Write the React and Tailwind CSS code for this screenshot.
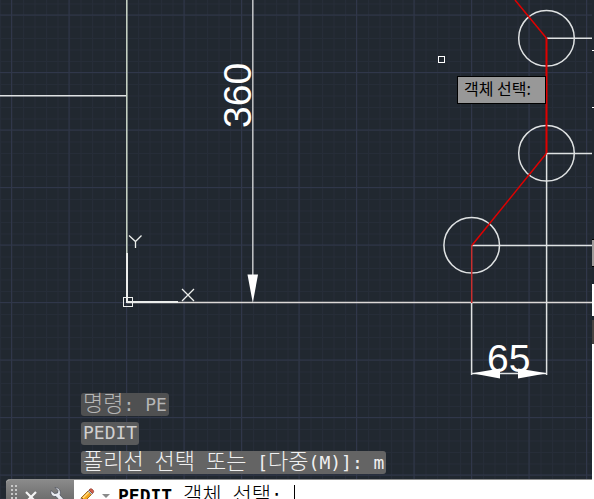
import React from "react";

function Grid() {
  return (
    <>
      <defs>
        <pattern id="minor" x="11.5" y="15" width="11.5" height="11.5" patternUnits="userSpaceOnUse">
          <path d="M0 0H11.5M0 0V11.5" stroke="#262d38" strokeWidth="2" fill="none" />
        </pattern>
        <pattern id="major" x="11" y="14.5" width="57.5" height="57.5" patternUnits="userSpaceOnUse">
          <path d="M0 0.5H57.5M0.5 0V57.5" stroke="#30374a" strokeWidth="1" fill="none" />
        </pattern>
      </defs>
      <rect width="100%" height="100%" fill="url(#minor)" />
      <rect width="100%" height="100%" fill="url(#major)" />
    </>
  );
}

function Drawing() {
  return (
    <svg className="absolute inset-0 h-full w-full" role="img" aria-label="Drawing area">
      <Grid />
      <g fill="none" stroke="#dfe2e3" strokeWidth="1.5">
        <path d="M0 95.7H127" />
        <path d="M126.8 0V302" stroke="#cbd8c9" />
        <path d="M127 302.6H592" stroke="#ddd9d7" />
        <path d="M252.8 0V280" stroke="#c4c6c8" />
        <path d="M547 38.3H592M547 153.4H592M472 245.4H592" />
        <path d="M546.6 153V375M471.6 303V375M472 373.4H547" />
        <circle cx="546.5" cy="38.3" r="27.8" />
        <circle cx="546.5" cy="153.3" r="27.8" />
        <circle cx="471.7" cy="245.3" r="27.8" />
      </g>
      <g fill="none" stroke="#e00000" strokeWidth="1.5">
        <path d="M515 0L546.5 38.3" />
        <path d="M546.5 38V153" strokeWidth="2" />
        <path d="M546.5 153.3L472 245.3" />
        <path d="M471.7 245V303" stroke="#c92e2e" />
      </g>
      <g fill="#fff">
        <path d="M247.5 274.5H258L252.8 303Z" />
        <path d="M472 373.3L500 368.5V378.5Z" />
        <path d="M547 373.3L518 368.5V378.5Z" />
      </g>
      <g fill="none" stroke="#eceeec" strokeWidth="1">
        <path d="M127 253V302H178" strokeWidth="2" />
        <rect x="123.5" y="297.5" width="9" height="9" />
        <path d="M129 235.5L135.5 241.5L141.5 235.5M135.5 241.5V248" strokeWidth="1.3" />
        <path d="M182 289L194 301M194 289L182 301" strokeWidth="1.3" />
        <rect x="438.5" y="56.5" width="6" height="6" stroke="#fff" />
      </g>
      <g className="fill-white font-['Liberation_Sans',Arial,sans-serif] text-[39px]">
        <text x="487" y="372">65</text>
        <text transform="translate(251 128) rotate(-90)">360</text>
      </g>
    </svg>
  );
}

function WindowEdge() {
  return (
    <div className="absolute inset-y-0 right-0 flex w-0.5 flex-col bg-[#212830]" aria-hidden="true">
      <div className="mt-[50px] h-px bg-white" />
      <div className="mt-14 h-px bg-white" />
      <div className="mt-[131px] h-7 border-y border-black bg-[#9d9b99]" />
      <div className="mt-[17px] h-8 bg-white" />
      <div className="mt-1 h-6 bg-[#484442]" />
      <div className="flex-1 bg-white" />
    </div>
  );
}

function MixedText({ text, size }) {
  return text.split(/([가-힣]+)/).map((part, i) =>
    i % 2 ? (
      <span key={i} className={`font-light ${size}`}>{part}</span>
    ) : (
      part
    )
  );
}

const HISTORY = [
  { text: "명령: PE", tone: "bg-[#4f5051] text-[#b5b5b5]" },
  { text: "PEDIT", tone: "bg-[#595a5b] text-[#d0d0d0]" },
  { text: "폴리선 선택 또는 [다중(M)]: m", tone: "bg-[#646464] text-[#f0f0f0]" },
];

function History() {
  return (
    <ol className="relative mb-[5px] ml-[81px] flex flex-col items-start gap-[6px]">
      {HISTORY.map(({ text, tone }) => (
        <li key={text} className={`h-[23px] rounded-[3px] px-[2px] leading-[22px] whitespace-pre ${tone}`}>
          <MixedText text={text} size="text-[22px]" />
        </li>
      ))}
    </ol>
  );
}

function Grip() {
  return (
    <svg className="ml-[5px] h-6 w-2" viewBox="0 0 8 24" aria-hidden="true">
      <path d="M1 0V24M5 0V24" stroke="#c8c8c8" strokeWidth="2" strokeDasharray="2 2" />
    </svg>
  );
}

function Wrench() {
  return (
    <svg className="h-5 w-5" viewBox="0 0 20 20" aria-hidden="true">
      <path
        d="M7 1.5L10 4.5L9.5 7L6.5 7.5L3 4.5C2 8 4 11 8 10.5L14.5 18C16.5 19.5 19 17 17.5 15L12 9C13.5 5 11 1.5 7 1.5Z"
        fill="#e7eaf0"
        stroke="#505460"
        strokeWidth="0.8"
      />
    </svg>
  );
}

function Pencil() {
  return (
    <svg className="h-4 w-4" viewBox="0 0 16 16" aria-hidden="true">
      <path d="M1 15L2.5 9.5L6 13Z" fill="#efcf9d" stroke="#4d3316" strokeWidth="0.8" />
      <path d="M2.5 9.5L9 3L12.5 6.5L6 13Z" fill="#f5a51e" stroke="#8a5210" strokeWidth="0.8" />
      <path d="M4 10L10 4" stroke="#ffe08a" strokeWidth="1.3" />
      <path d="M9 3L10 2L13.5 5.5L12.5 6.5Z" fill="#cfd4da" stroke="#70757c" strokeWidth="0.5" />
      <path d="M10 2C11 0.5 12.5 0.5 13.5 1.5C15 3 15 4 13.5 5.5Z" fill="#d9604c" stroke="#7c3024" strokeWidth="0.7" />
      <path d="M1 15L1.6 12.8L3.2 14.4Z" fill="#222" />
    </svg>
  );
}

function CommandBar() {
  return (
    <div className="relative ml-[6px] mr-0.5 h-5 overflow-hidden rounded-tl-[4px] border-t border-[#8d8d8d] bg-white">
      <form className="flex h-8">
        <div className="flex w-[68px] shrink-0 items-start bg-linear-to-b from-[#8a8a8a] to-[#5c5c5c] pt-[5px]">
          <Grip />
          <button type="button" aria-label="Close" className="mt-[6px] ml-[6px]">
            <svg className="h-3 w-3" viewBox="0 0 12 12" aria-hidden="true">
              <path d="M1 1L11 11M11 1L1 11" stroke="#f5f5f5" strokeWidth="2.2" />
            </svg>
          </button>
          <button type="button" aria-label="Customize" className="mt-px ml-[11px]">
            <Wrench />
          </button>
        </div>
        <button type="button" aria-label="Recent commands" className="ml-[5px] flex shrink-0 items-center gap-[7px]">
          <Pencil />
          <svg className="h-1 w-2" viewBox="0 0 8 4" aria-hidden="true">
            <path d="M0 0H8L4 4Z" fill="#8a8a8a" />
          </svg>
        </button>
        <label htmlFor="command" className="ml-2 shrink-0 leading-[30px] whitespace-pre text-black">
          <b>PEDIT</b> <MixedText text="객체 선택:" size="text-[21px]" />
        </label>
        <input
          id="command"
          className="mt-[5px] ml-3 h-6 min-w-0 flex-1 border-l border-black outline-none"
        />
      </form>
    </div>
  );
}

export default function App() {
  return (
    <main className="relative flex h-screen w-full flex-col justify-end overflow-hidden bg-[#212830] font-['DejaVu_Sans_Mono','Noto_Sans_CJK_KR',monospace] text-[18px]">
      <Drawing />
      <WindowEdge />
      <div role="tooltip" className="absolute left-[457px] top-[76px] h-7 w-[89px] border border-black bg-[#989898] pl-[6px] font-['Noto_Sans_CJK_KR',sans-serif] text-[16px] leading-[22px] whitespace-nowrap text-black">
        객체 선택:
      </div>
      <History />
      <CommandBar />
    </main>
  );
}
